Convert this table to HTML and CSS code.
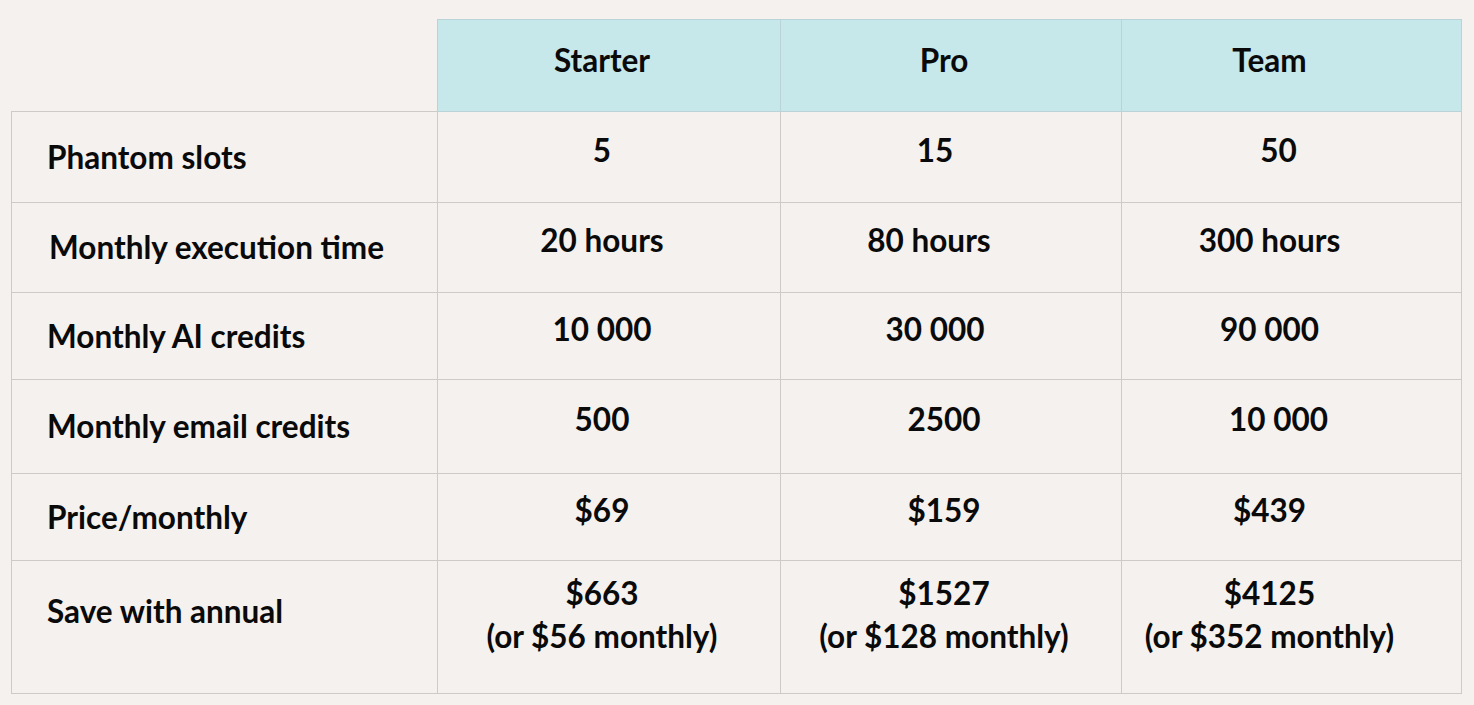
FILE: index.html
```html
<!DOCTYPE html>
<html lang="en">
<head>
<meta charset="utf-8">
<title>Plans comparison</title>
<link rel="stylesheet" href="styles.css">
</head>
<body>
<div class="page">
  <table class="plans">
    <colgroup>
      <col class="c-label">
      <col class="c-plan1">
      <col class="c-plan2">
      <col class="c-plan3">
    </colgroup>
    <thead>
      <tr class="r-head">
        <th class="blank"></th>
        <th class="plan p1">Starter</th>
        <th class="plan p2">Pro</th>
        <th class="plan p3">Team</th>
      </tr>
    </thead>
    <tbody>
      <tr class="r1">
        <th class="label">Phantom slots</th>
        <td class="p1">5</td>
        <td class="p2 n-l">15</td>
        <td class="p3 n-r">50</td>
      </tr>
      <tr class="r2">
        <th class="label l-shift">Monthly execution time</th>
        <td class="p1">20 hours</td>
        <td class="p2 n-ll">80 hours</td>
        <td class="p3">300 hours</td>
      </tr>
      <tr class="r3">
        <th class="label">Monthly AI credits</th>
        <td class="p1">10 000</td>
        <td class="p2 n-l">30 000</td>
        <td class="p3">90 000</td>
      </tr>
      <tr class="r4">
        <th class="label">Monthly email credits</th>
        <td class="p1">500</td>
        <td class="p2">2500</td>
        <td class="p3 n-r">10 000</td>
      </tr>
      <tr class="r5">
        <th class="label">Price/monthly</th>
        <td class="p1">$69</td>
        <td class="p2">$159</td>
        <td class="p3">$439</td>
      </tr>
      <tr class="r6">
        <th class="label top">Save with annual</th>
        <td class="p1">$663<br>(or $56 monthly)</td>
        <td class="p2">$1527<br>(or $128 monthly)</td>
        <td class="p3">$4125<br>(or $352 monthly)</td>
      </tr>
    </tbody>
  </table>
</div>
</body>
</html>
```

FILE: styles.css
```css
html, body {
  margin: 0;
  padding: 0;
  background: #f4f1ee;
}

.page {
  padding: 19px 0 0 11px;
  font-family: "Lato", "Liberation Sans", sans-serif;
  color: #0a0a0a;
}

.plans {
  border-collapse: collapse;
  table-layout: fixed;
  width: 1450px;
}

.c-label { width: 426px; }
.c-plan1 { width: 343px; }
.c-plan2 { width: 341px; }
.c-plan3 { width: 340px; }

.plans th,
.plans td {
  border: 1px solid #cdcac7;
  font-size: 31.5px;
  font-weight: 700;
  line-height: 43px;
  text-align: center;
  padding: 0;
  vertical-align: middle;
}

.plans th.blank {
  border: none;
  background: transparent;
}

.plans th.plan {
  background: #c6e8ea;
  border-color: #b9d3d6;
  height: 81px;
  padding-bottom: 10px;
}

/* label cells: vertically centred */
.plans th.label {
  text-align: left;
  padding-left: 35px;
}

.plans th.label.l-shift { padding-left: 37px; }

.plans .r1 > th { height: 90px; }
.plans .r2 > th { height: 89px; }
.plans .r3 > th { height: 86px; }
.plans .r4 > th { height: 93px; }
.plans .r5 > th { height: 86px; }

.plans .r6 > th.top {
  vertical-align: top;
  height: 103px;
  padding-top: 29px;
}

/* value cells: sit a little above centre */
.plans td { padding-bottom: 14px; }

.plans .r1 > td { height: 76px; }
.plans .r2 > td { height: 75px; }
.plans .r3 > td { height: 72px; }
.plans .r4 > td { height: 79px; }
.plans .r5 > td { height: 72px; }
.plans .r6 > td { height: 108px; padding-bottom: 24px; }

.plans .p1 { padding-right: 14px; }
.plans .p2 { padding-right: 14px; }
.plans .p3 { padding-right: 44px; }

.plans td.n-l { padding-right: 32px; }
.plans td.n-ll { padding-right: 44px; }
.plans td.n-r { padding-right: 26px; }
```
